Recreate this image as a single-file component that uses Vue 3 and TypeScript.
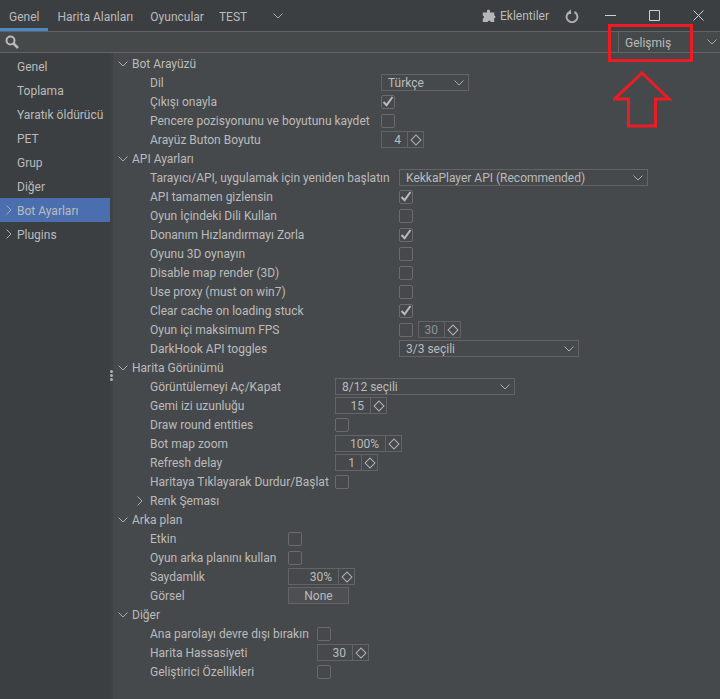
<script setup lang="ts">
type Control =
  | { kind: 'combo'; text: string; width: number }
  | { kind: 'check'; checked?: boolean }
  | { kind: 'spin'; value: string; width: number }
  | { kind: 'button'; text: string; width: number }
  | { kind: 'fps' }
  | { kind: 'none' }

interface Row {
  label: string
  control: Control
  collapsed?: boolean
}

interface Group {
  title: string
  labelWidth: number
  rows: Row[]
}

const tabs = ['Genel', 'Harita Alanları', 'Oyuncular', 'TEST']

const sideItems = [
  { label: 'Genel' },
  { label: 'Toplama' },
  { label: 'Yaratık öldürücü' },
  { label: 'PET' },
  { label: 'Grup' },
  { label: 'Diğer' },
  { label: 'Bot Ayarları', arrow: true, active: true },
  { label: 'Plugins', arrow: true },
]

const groups: Group[] = [
  {
    title: 'Bot Arayüzü',
    labelWidth: 231,
    rows: [
      { label: 'Dil', control: { kind: 'combo', text: 'Türkçe', width: 88 } },
      { label: 'Çıkışı onayla', control: { kind: 'check', checked: true } },
      { label: 'Pencere pozisyonunu ve boyutunu kaydet', control: { kind: 'check' } },
      { label: 'Arayüz Buton Boyutu', control: { kind: 'spin', value: '4', width: 43 } },
    ],
  },
  {
    title: 'API Ayarları',
    labelWidth: 249,
    rows: [
      { label: 'Tarayıcı/API, uygulamak için yeniden başlatın', control: { kind: 'combo', text: 'KekkaPlayer API (Recommended)', width: 249 } },
      { label: 'API tamamen gizlensin', control: { kind: 'check', checked: true } },
      { label: 'Oyun İçindeki Dili Kullan', control: { kind: 'check' } },
      { label: 'Donanım Hızlandırmayı Zorla', control: { kind: 'check', checked: true } },
      { label: 'Oyunu 3D oynayın', control: { kind: 'check' } },
      { label: 'Disable map render (3D)', control: { kind: 'check' } },
      { label: 'Use proxy (must on win7)', control: { kind: 'check' } },
      { label: 'Clear cache on loading stuck', control: { kind: 'check', checked: true } },
      { label: 'Oyun içi maksimum FPS', control: { kind: 'fps' } },
      { label: 'DarkHook API toggles', control: { kind: 'combo', text: '3/3 seçili', width: 180 } },
    ],
  },
  {
    title: 'Harita Görünümü',
    labelWidth: 185,
    rows: [
      { label: 'Görüntülemeyi Aç/Kapat', control: { kind: 'combo', text: '8/12 seçili', width: 180 } },
      { label: 'Gemi izi uzunluğu', control: { kind: 'spin', value: '15', width: 52 } },
      { label: 'Draw round entities', control: { kind: 'check' } },
      { label: 'Bot map zoom', control: { kind: 'spin', value: '100%', width: 67 } },
      { label: 'Refresh delay', control: { kind: 'spin', value: '1', width: 43 } },
      { label: 'Haritaya Tıklayarak Durdur/Başlat', control: { kind: 'check' } },
      { label: 'Renk Şeması', control: { kind: 'none' }, collapsed: true },
    ],
  },
  {
    title: 'Arka plan',
    labelWidth: 138,
    rows: [
      { label: 'Etkin', control: { kind: 'check' } },
      { label: 'Oyun arka planını kullan', control: { kind: 'check' } },
      { label: 'Saydamlık', control: { kind: 'spin', value: '30%', width: 67 } },
      { label: 'Görsel', control: { kind: 'button', text: 'None', width: 61 } },
    ],
  },
  {
    title: 'Diğer',
    labelWidth: 167,
    rows: [
      { label: 'Ana parolayı devre dışı bırakın', control: { kind: 'check' } },
      { label: 'Harita Hassasiyeti', control: { kind: 'spin', value: '30', width: 52 } },
      { label: 'Geliştirici Özellikleri', control: { kind: 'check' } },
    ],
  },
]
</script>

<template>
  <div class="window">
    <header class="topbar">
      <nav class="tabs">
        <span v-for="(tab, i) in tabs" :key="tab" class="tab" :class="{ current: i === 0 }">{{ tab }}</span>
        <svg class="tabs-more" width="10" height="6" viewBox="0 0 10 6"><path d="M.5.5 5 5 9.500.5" /></svg>
      </nav>
      <div class="actions">
        <svg class="puzzle" width="14" height="14" viewBox="0 0 14 14">
          <path d="M5 1.600C5 .4 8 .4 8 1.600V3.400h4.200v3.200c1.600-.6 1.800 3.200 0 2.500V13H8.600c.6-1.700-3.200-1.700-2.600 0H.8V9.400c1.500.6 1.700-3.200 0-2.600V3.400H5z" />
        </svg>
        <span class="plugins">Eklentiler</span>
        <svg class="refresh" width="14" height="14" viewBox="0 0 14 14">
          <path d="M4.600 3A5.400 5.400 0 1 0 9.400 3" />
          <path class="refresh-head" d="M6 .4v4.600H1.800z" transform="rotate(-8 5 3)" />
        </svg>
        <svg class="win-icon min" width="11" height="1" viewBox="0 0 11 1"><path d="M0 .5h11" /></svg>
        <svg class="win-icon max" width="11" height="11" viewBox="0 0 11 11"><path d="M.5.5h10v10H.5z" /></svg>
        <svg class="win-icon close" width="11" height="11" viewBox="0 0 11 11"><path d="M.5.5l10 10M10.500.5l-10 10" /></svg>
      </div>
    </header>

    <div class="searchbar">
      <svg class="search-icon" width="14" height="14" viewBox="0 0 14 14">
        <circle cx="5.500" cy="5.500" r="4" />
        <path d="M8.500 8.500 13 13" />
      </svg>
      <input class="search-input" type="text" />
      <div class="mode">
        <span class="mode-text">Gelişmiş</span>
        <svg width="10" height="6" viewBox="0 0 10 6"><path d="M.5.5 5 5 9.500.5" /></svg>
      </div>
    </div>

    <div class="body">
      <aside class="sidebar">
        <div v-for="item in sideItems" :key="item.label" class="side-item" :class="{ active: item.active }">
          <svg v-if="item.arrow" class="side-arrow" width="6" height="10" viewBox="0 0 6 10"><path d="M.5.5 5 5 .5 9.500" /></svg>
          {{ item.label }}
        </div>
      </aside>
      <div class="splitter">
        <i></i><i></i><i></i>
      </div>
      <main class="content">
        <section v-for="group in groups" :key="group.title" class="group">
          <div class="group-title">
            <svg width="10" height="6" viewBox="0 0 10 6"><path d="M.5.5 5 5 9.500.5" /></svg>
            <span class="nudge">{{ group.title }}</span>
          </div>
          <div v-for="row in group.rows" :key="row.label" class="row">
            <svg v-if="row.collapsed" class="row-arrow" width="6" height="10" viewBox="0 0 6 10"><path d="M.5.5 5 5 .5 9.500" /></svg>
            <span class="label nudge" :style="{ width: group.labelWidth + 'px' }">{{ row.label }}</span>

            <div v-if="row.control.kind === 'combo'" class="combo" :style="{ width: row.control.width + 'px' }">
              <span class="nudge">{{ row.control.text }}</span>
              <svg width="10" height="6" viewBox="0 0 10 6"><path d="M.5.5 5 5 9.500.5" /></svg>
            </div>

            <div v-else-if="row.control.kind === 'check'" class="check">
              <svg v-if="row.control.checked" width="12" height="11" viewBox="0 0 12 11"><path d="M1.500 6 4.600 9.200 10.500 1" /></svg>
            </div>

            <div v-else-if="row.control.kind === 'spin'" class="spin" :style="{ width: row.control.width + 'px' }">
              <span class="spin-value">{{ row.control.value }}</span>
              <span class="spin-btn"><i></i></span>
            </div>

            <div v-else-if="row.control.kind === 'button'" class="btn" :style="{ width: row.control.width + 'px' }">
              {{ row.control.text }}
            </div>

            <div v-else-if="row.control.kind === 'fps'" class="fps">
              <div class="check"></div>
              <div class="spin dim">
                <span class="spin-value">30</span>
                <span class="spin-btn"><i></i></span>
              </div>
            </div>
          </div>
        </section>
      </main>
    </div>

    <!-- red annotation drawn on top of the screenshot -->
    <div class="mark-box"></div>
    <svg class="mark-arrow" width="60" height="58" viewBox="0 0 60 58">
      <path d="M29 2 1.500 28H15.500V55H42.500V28H56z" />
    </svg>
  </div>
</template>

<style scoped>
.window {
  position: relative;
  width: 720px;
  height: 699px;
  display: flex;
  flex-direction: column;
  overflow: hidden;
  background: #46494b;
  color: #bbbbbb;
  font-family: Roboto, "Noto Sans", sans-serif;
  font-size: 12px;
  line-height: 19px;
}
svg path {
  fill: none;
  stroke: #a9abac;
  stroke-width: 1;
}
.nudge {
  padding-top: 2px;
}
.topbar {
  height: 31px;
  flex: none;
  display: flex;
  justify-content: space-between;
  background: #3c3f41;
  border-bottom: 1px solid #646464;
}
.tabs {
  display: flex;
  align-items: stretch;
}
.tab {
  padding: 8px 9px 0;
}
.tab:nth-child(3) {
  padding-left: 8px;
}
.tab.current {
  border-bottom: 3px solid #4a88c7;
  height: 31px;
  box-sizing: border-box;
}
.tab:nth-child(4) {
  padding-left: 6px;
}
.tabs-more {
  margin: 13px 0 0 17px;
}
.actions {
  display: flex;
  align-items: center;
  padding-right: 16px;
}
.puzzle path {
  fill: #b4b6b7;
  stroke: none;
}
.plugins {
  margin-left: 4px;
  padding-top: 2px;
}
.refresh {
  margin-left: 16px;
}
.refresh path {
  stroke-width: 2;
}
.refresh .refresh-head {
  fill: #b4b6b7;
  stroke: none;
}
.win-icon {
  margin-left: 33px;
}
.win-icon.min {
  margin-left: 26px;
}
.win-icon path {
  stroke: #cfd0d1;
}
.searchbar {
  height: 20px;
  flex: none;
  display: flex;
  align-items: stretch;
  background: #45494a;
  border-bottom: 1px solid #646464;
}
.search-icon {
  margin: 3px 0 0 5px;
}
.search-icon circle {
  fill: none;
  stroke: #bbbbbb;
  stroke-width: 2;
}
.search-icon path {
  stroke: #bbbbbb;
  stroke-width: 2.500;
}
.search-input {
  flex: 1;
  border: none;
  outline: none;
  background: transparent;
}
.mode {
  width: 102px;
  flex: none;
  display: flex;
  align-items: center;
  justify-content: space-between;
  padding: 0 3px 0 6px;
  box-sizing: border-box;
  border-left: 1px solid #646464;
}
.mode-text {
  padding-top: 3px;
}
.body {
  flex: 1;
  display: flex;
  min-height: 0;
}
.sidebar {
  width: 110px;
  flex: none;
  padding-top: 1px;
  background: #3c3f41;
}
.side-item {
  position: relative;
  height: 24px;
  box-sizing: border-box;
  line-height: 24px;
  padding: 1px 0 0 17px;
}
.side-item.active {
  background: #4b6eaf;
}
.side-arrow {
  position: absolute;
  left: 6px;
  top: 7px;
}
.splitter {
  position: relative;
  width: 3px;
  flex: none;
  background: #3f4244;
}
.splitter i {
  display: block;
  width: 3px;
  height: 3px;
  border-radius: 50%;
  margin-bottom: 1px;
  background: #b0b2b3;
  position: relative;
  top: 317px;
  left: 0;
}
.content {
  flex: 1;
  padding-top: 1px;
}
.group-title {
  height: 19px;
  display: flex;
  align-items: center;
  gap: 4px;
  padding-left: 5px;
}
.row {
  position: relative;
  height: 19px;
  display: flex;
  align-items: center;
  padding-left: 37px;
}
.row-arrow {
  position: absolute;
  left: 24px;
  top: 5px;
}
.label {
  flex: none;
  white-space: nowrap;
}
.combo {
  height: 17px;
  box-sizing: border-box;
  display: flex;
  align-items: center;
  justify-content: space-between;
  padding: 0 4px 0 6px;
  border: 1px solid #646464;
}
.check {
  width: 14px;
  height: 14px;
  box-sizing: border-box;
  display: flex;
  align-items: center;
  justify-content: center;
  border: 1px solid #6b6b6b;
  border-radius: 2px;
}
.check path {
  stroke: #bbbbbb;
  stroke-width: 2;
}
.spin {
  height: 17px;
  box-sizing: border-box;
  display: flex;
  border: 1px solid #646464;
}
.spin-value {
  flex: 1;
  text-align: right;
  padding: 1px 6px 0 0;
  line-height: 15px;
}
.spin-btn {
  width: 15px;
  flex: none;
  display: flex;
  align-items: center;
  justify-content: center;
  border-left: 1px solid #646464;
}
.spin-btn i {
  width: 6px;
  height: 6px;
  border: 1px solid #b0b2b3;
  transform: rotate(45deg);
}
.btn {
  height: 17px;
  box-sizing: border-box;
  text-align: center;
  line-height: 16px;
  background: #4c5052;
  border: 1px solid #646464;
}
.fps {
  display: flex;
  align-items: center;
  gap: 5px;
}
.spin.dim {
  width: 43px;
  color: #8f9192;
}
.mark-box {
  position: absolute;
  left: 608px;
  top: 24px;
  width: 85px;
  height: 38px;
  box-sizing: border-box;
  border: 3px solid #ed1c24;
}
.mark-arrow {
  position: absolute;
  left: 613px;
  top: 71px;
}
.mark-arrow path {
  stroke: #ed1c24;
  stroke-width: 3;
}
</style>

<style>
html,
body {
  margin: 0;
  background: #46494b;
}
</style>
